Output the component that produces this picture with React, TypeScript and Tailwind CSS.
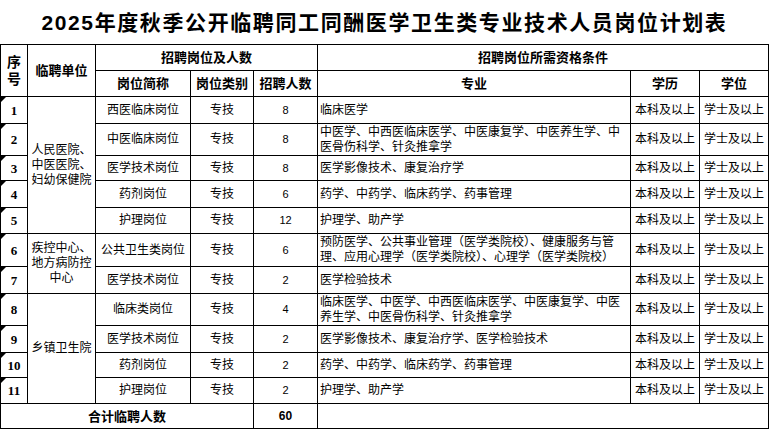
import React from 'react';

interface Row {
  no: string;
  post: string;
  count: string;
  major: string[];
  h: string;
}

const rows: Row[] = [
  { no: '1', post: '西医临床岗位', count: '8', major: ['临床医学'], h: 'h-[27px]' },
  { no: '2', post: '中医临床岗位', count: '8', major: ['中医学、中西医临床医学、中医康复学、中医养生学、中', '医骨伤科学、针灸推拿学'], h: 'h-[32px]' },
  { no: '3', post: '医学技术岗位', count: '8', major: ['医学影像技术、康复治疗学'], h: 'h-[25px]' },
  { no: '4', post: '药剂岗位', count: '6', major: ['药学、中药学、临床药学、药事管理'], h: 'h-[27px]' },
  { no: '5', post: '护理岗位', count: '12', major: ['护理学、助产学'], h: 'h-[26px]' },
  { no: '6', post: '公共卫生类岗位', count: '6', major: ['预防医学、公共事业管理（医学类院校）、健康服务与管', '理、应用心理学（医学类院校）、心理学（医学类院校）'], h: 'h-[33px]' },
  { no: '7', post: '医学技术岗位', count: '2', major: ['医学检验技术'], h: 'h-[27px]' },
  { no: '8', post: '临床类岗位', count: '4', major: ['临床医学、中医学、中西医临床医学、中医康复学、中医', '养生学、中医骨伤科学、针灸推拿学'], h: 'h-[32px]' },
  { no: '9', post: '医学技术岗位', count: '2', major: ['医学影像技术、康复治疗学、医学检验技术'], h: 'h-[27px]' },
  { no: '10', post: '药剂岗位', count: '2', major: ['药学、中药学、临床药学、药事管理'], h: 'h-[25px]' },
  { no: '11', post: '护理岗位', count: '2', major: ['护理学、助产学'], h: 'h-[26px]' },
];

const units: Record<number, { span: number; lines: string[] }> = {
  0: { span: 5, lines: ['人民医院、', '中医医院、', '妇幼保健院'] },
  5: { span: 2, lines: ['疾控中心、', '地方病防控', '中心'] },
  7: { span: 4, lines: ['乡镇卫生院'] },
};

const cell = 'border border-black p-0 align-middle';

export default function App() {
  return (
    <div className="w-[769px] h-[430px] bg-white text-black font-['Liberation_Sans','Noto_Sans_CJK_SC',sans-serif] overflow-hidden">
      <div className="h-[44px] flex items-center justify-center pt-[1px]">
        <h1 className="text-[21px] font-bold tracking-[1.6px] leading-none">
          2025年度秋季公开临聘同工同酬医学卫生类专业技术人员岗位计划表
        </h1>
      </div>

      <table className="w-[768px] table-fixed border-collapse text-[12px] leading-[15px]">
        <colgroup>
          <col className="w-[27px]" />
          <col className="w-[68px]" />
          <col className="w-[95px]" />
          <col className="w-[63px]" />
          <col className="w-[64px]" />
          <col className="w-[313px]" />
          <col className="w-[69px]" />
          <col className="w-[69px]" />
        </colgroup>
        <thead>
          <tr className="h-[26px] font-bold text-[13px]">
            <td rowSpan={2} className={`${cell} text-center text-[14px] leading-[17px]`}>
              序<br />号
            </td>
            <td rowSpan={2} className={`${cell} text-center`}>临聘单位</td>
            <td colSpan={3} className={`${cell} text-center`}>招聘岗位及人数</td>
            <td colSpan={3} className={`${cell} text-center`}>招聘岗位所需资格条件</td>
          </tr>
          <tr className="h-[26px] font-bold text-[13px]">
            <td className={`${cell} text-center`}>岗位简称</td>
            <td className={`${cell} text-center`}>岗位类别</td>
            <td className={`${cell} text-center`}>招聘人数</td>
            <td className={`${cell} text-center`}>专业</td>
            <td className={`${cell} text-center`}>学历</td>
            <td className={`${cell} text-center`}>学位</td>
          </tr>
        </thead>
        <tbody>
          {rows.map((r, i) => (
            <tr key={r.no} className={r.h}>
              <td className={`${cell} relative text-center font-bold font-['Liberation_Serif',serif] text-[13px]`}>
                <span className="absolute top-0 left-0 w-0 h-0 border-t-[5px] border-r-[5px] border-t-black border-r-transparent" />
                {r.no}
              </td>
              {units[i] && (
                <td rowSpan={units[i].span} className={`${cell} text-center`}>
                  {units[i].lines.map((l) => (
                    <div key={l} className="whitespace-nowrap">{l}</div>
                  ))}
                </td>
              )}
              <td className={`${cell} text-center whitespace-nowrap`}>{r.post}</td>
              <td className={`${cell} text-center`}>专技</td>
              <td className={`${cell} text-center text-[11px]`}>{r.count}</td>
              <td className={`${cell} pl-[2px] whitespace-nowrap`}>
                {r.major.map((m) => (
                  <div key={m}>{m}</div>
                ))}
              </td>
              <td className={`${cell} text-center whitespace-nowrap`}>本科及以上</td>
              <td className={`${cell} text-center whitespace-nowrap`}>学士及以上</td>
            </tr>
          ))}
          <tr className="h-[25px]">
            <td colSpan={4} className={`${cell} text-center font-bold text-[13px]`}>合计临聘人数</td>
            <td className={`${cell} text-center font-bold text-[12px]`}>60</td>
            <td colSpan={3} className={cell}></td>
          </tr>
        </tbody>
      </table>
    </div>
  );
}
